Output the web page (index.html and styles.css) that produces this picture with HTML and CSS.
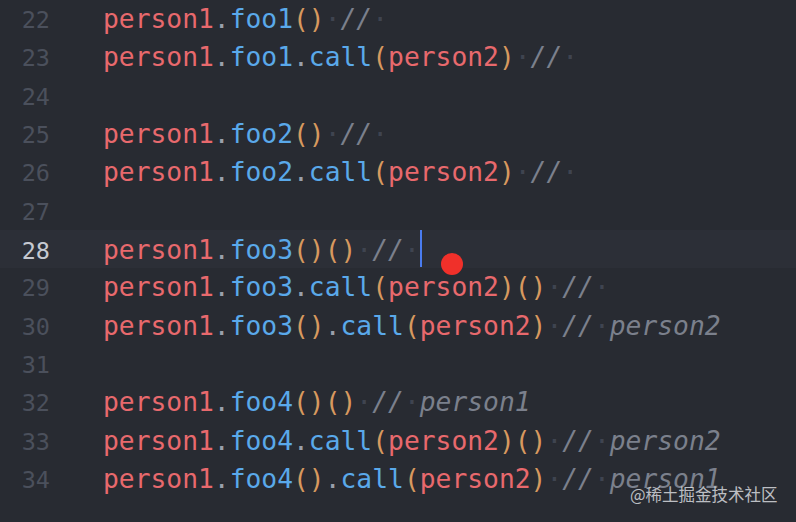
FILE: index.html
```html
<!DOCTYPE html>
<html>
<head>
<meta charset="utf-8">
<link rel="stylesheet" href="styles.css">
</head>
<body>
<div class="editor">
  <div class="line"><span class="ln">22</span><span class="code"><span class="v">person1</span><span class="p">.</span><span class="f">foo1</span><span class="b">()</span><span class="ws">·</span><span class="c">//</span><span class="ws">·</span></span></div>
  <div class="line"><span class="ln">23</span><span class="code"><span class="v">person1</span><span class="p">.</span><span class="f">foo1</span><span class="p">.</span><span class="f">call</span><span class="b">(</span><span class="v">person2</span><span class="b">)</span><span class="ws">·</span><span class="c">//</span><span class="ws">·</span></span></div>
  <div class="line"><span class="ln">24</span><span class="code"></span></div>
  <div class="line"><span class="ln">25</span><span class="code"><span class="v">person1</span><span class="p">.</span><span class="f">foo2</span><span class="b">()</span><span class="ws">·</span><span class="c">//</span><span class="ws">·</span></span></div>
  <div class="line"><span class="ln">26</span><span class="code"><span class="v">person1</span><span class="p">.</span><span class="f">foo2</span><span class="p">.</span><span class="f">call</span><span class="b">(</span><span class="v">person2</span><span class="b">)</span><span class="ws">·</span><span class="c">//</span><span class="ws">·</span></span></div>
  <div class="line"><span class="ln">27</span><span class="code"></span></div>
  <div class="line active"><span class="ln">28</span><span class="code"><span class="v">person1</span><span class="p">.</span><span class="f">foo3</span><span class="b">()()</span><span class="ws">·</span><span class="c">//</span><span class="ws">·</span><span class="cursor"></span></span><span class="click"></span></div>
  <div class="line"><span class="ln">29</span><span class="code"><span class="v">person1</span><span class="p">.</span><span class="f">foo3</span><span class="p">.</span><span class="f">call</span><span class="b">(</span><span class="v">person2</span><span class="b">)()</span><span class="ws">·</span><span class="c">//</span><span class="ws">·</span></span></div>
  <div class="line"><span class="ln">30</span><span class="code"><span class="v">person1</span><span class="p">.</span><span class="f">foo3</span><span class="b">()</span><span class="p">.</span><span class="f">call</span><span class="b">(</span><span class="v">person2</span><span class="b">)</span><span class="ws">·</span><span class="c">//</span><span class="ws">·</span><span class="c">person2</span></span></div>
  <div class="line"><span class="ln">31</span><span class="code"></span></div>
  <div class="line"><span class="ln">32</span><span class="code"><span class="v">person1</span><span class="p">.</span><span class="f">foo4</span><span class="b">()()</span><span class="ws">·</span><span class="c">//</span><span class="ws">·</span><span class="c">person1</span></span></div>
  <div class="line"><span class="ln">33</span><span class="code"><span class="v">person1</span><span class="p">.</span><span class="f">foo4</span><span class="p">.</span><span class="f">call</span><span class="b">(</span><span class="v">person2</span><span class="b">)()</span><span class="ws">·</span><span class="c">//</span><span class="ws">·</span><span class="c">person2</span></span></div>
  <div class="line"><span class="ln">34</span><span class="code"><span class="v">person1</span><span class="p">.</span><span class="f">foo4</span><span class="b">()</span><span class="p">.</span><span class="f">call</span><span class="b">(</span><span class="v">person2</span><span class="b">)</span><span class="ws">·</span><span class="c">//</span><span class="ws">·</span><span class="c">person1</span></span></div>
</div>
<div class="watermark">@稀土掘金技术社区</div>
</body>
</html>
```

FILE: styles.css
```css
html, body {
  margin: 0;
  padding: 0;
  width: 796px;
  height: 522px;
  overflow: hidden;
  background: #282b32;
}
body {
  position: relative;
}
.editor {
  display: flex;
  flex-direction: column;
  font-family: "DejaVu Sans Mono", monospace;
}
.line {
  position: relative;
  display: block;
  height: 38.33px;
  line-height: 38.33px;
  font-size: 26.3px;
  white-space: pre;
}
.line.active {
  background: #2c2f37;
}
.ln {
  display: inline-block;
  width: 50px;
  text-align: right;
  font-size: 23.5px;
  color: #4b505c;
}
.active .ln {
  color: #c6c9d0;
}
.code {
  margin-left: 53px;
}
.v { color: #e8696d; }
.f { color: #5aa9ea; }
.p { color: #9aa0ab; }
.b { color: #d7995f; }
.c { color: #7b808c; font-style: italic; }
.ws { color: #3f4450; }
.cursor {
  display: inline-block;
  width: 2px;
  height: 37px;
  background: #4a7cf0;
  vertical-align: -8px;
}
.click {
  position: absolute;
  left: 441px;
  top: 23px;
  width: 22px;
  height: 22px;
  border-radius: 50%;
  background: #f0302a;
}
.watermark {
  position: absolute;
  left: 630px;
  top: 482px;
  font-family: "Noto Sans CJK SC", sans-serif;
  font-size: 16.5px;
  line-height: 24px;
  color: rgba(230, 232, 236, 0.78);
}
```
